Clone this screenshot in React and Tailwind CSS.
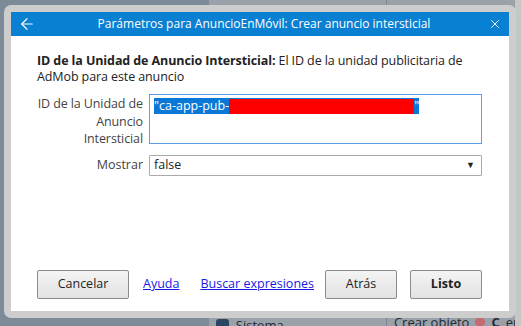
import { ArrowLeft, X } from "lucide-react";

function Button({ children, bold, className = "" }) {
  return (
    <button
      className={`h-[29px] rounded-[2px] border border-[#8c8c8c] bg-gradient-to-b from-[#f4f4f4] to-[#e2e2e2] text-[12.5px] text-[#222] ${
        bold ? "font-bold" : ""
      } ${className}`}
    >
      {children}
    </button>
  );
}

function Dialog() {
  return (
    <div className="absolute left-[4px] top-[5px] w-[512px] h-[313px] rounded-[7px] bg-[#cdcdcd] px-[7px] pt-[7px] pb-[7px] flex flex-col">
      {/* TITLE BAR */}
      <div className="h-[24px] bg-[#0a80d2] flex items-center pl-[7px] pr-[7px] text-white">
        <ArrowLeft size={18} strokeWidth={1.5} />
        <div className="flex-1 text-center text-[12px] pl-[4px]">
          Parámetros para AnuncioEnMóvil: Crear anuncio intersticial
        </div>
        <X size={14} strokeWidth={1.6} />
      </div>

      {/* BODY */}
      <div className="flex-1 bg-white flex flex-col pl-[26px] pr-[27px] pt-[17px] pb-[12px] text-[12.5px] text-[#222]">
        <p className="leading-[16px] tracking-[-0.1px]">
          <span className="font-bold">ID de la Unidad de Anuncio Intersticial:</span> El ID de la unidad publicitaria de
          AdMob para este anuncio
        </p>

        <div className="mt-[9px] flex gap-[6px]">
          <div className="w-[106px] text-right leading-[17.5px] text-[#444] pt-[1px] tracking-[-0.1px]">
            ID de la Unidad de Anuncio Intersticial
          </div>
          <div className="flex-1 h-[50px] border border-[#5b9de2] px-[4px] pt-[2px]">
            <span className="inline-flex items-center h-[16px] bg-[#0a78d7] text-white leading-[16px]">
              "ca-app-pub-
              <span className="inline-block w-[185px] h-[15px] bg-[#ff0000]"></span>
              "
            </span>
          </div>
        </div>

        <div className="mt-[7px] flex items-center gap-[6px]">
          <div className="w-[106px] text-right text-[#444]">Mostrar</div>
          <div className="flex-1 h-[21px] border border-[#a9a9a9] rounded-[1px] flex items-center pl-[4px] pr-[6px]">
            <span className="flex-1">false</span>
            <span className="text-[9px] text-[#222]">▼</span>
          </div>
        </div>

        <div className="mt-auto flex items-center">
          <Button className="w-[92px]">Cancelar</Button>
          <a href="#" className="ml-[14px] text-[#1a1ae6] underline">Ayuda</a>
          <a href="#" className="ml-[21px] text-[#1a1ae6] underline">Buscar expresiones</a>
          <div className="flex-1" />
          <Button className="w-[72px]">Atrás</Button>
          <Button bold className="w-[72px] ml-[13px]">Listo</Button>
        </div>
      </div>
    </div>
  );
}

export default function App() {
  return (
    <div
      className="relative w-[521px] h-[326px] overflow-hidden flex"
      style={{ fontFamily: '"Open Sans", "Noto Sans", sans-serif' }}
    >
      {/* BACKGROUND APP */}
      <div className="w-[210px] bg-[#7d8a98]" />
      <div className="w-[178px] bg-[#9ba1a8] flex flex-col justify-end">
        <div className="flex items-center gap-[7px] pl-[7px] -mb-[9px] text-[13px] text-[#1e2a36] whitespace-nowrap">
          <span className="w-[13px] h-[12px] rounded-[3px] bg-[#2a4660]" />
          Sistema
        </div>
      </div>
      <div className="flex-1 bg-[#9ba1a8] border-l border-[#80868d] flex flex-col justify-end">
        <div className="flex items-center gap-[6px] pl-[7px] -mb-[6px] text-[13px] text-[#1e2a36] whitespace-nowrap">
          Crear objeto
          <span className="w-[10px] h-[8px] rounded-full bg-[#c46a72]" />
          <span className="font-bold">C</span> en
        </div>
      </div>
      <div className="absolute right-0 top-0 w-[6px] h-full bg-[#c6c6c6]" />

      <Dialog />
    </div>
  );
}
